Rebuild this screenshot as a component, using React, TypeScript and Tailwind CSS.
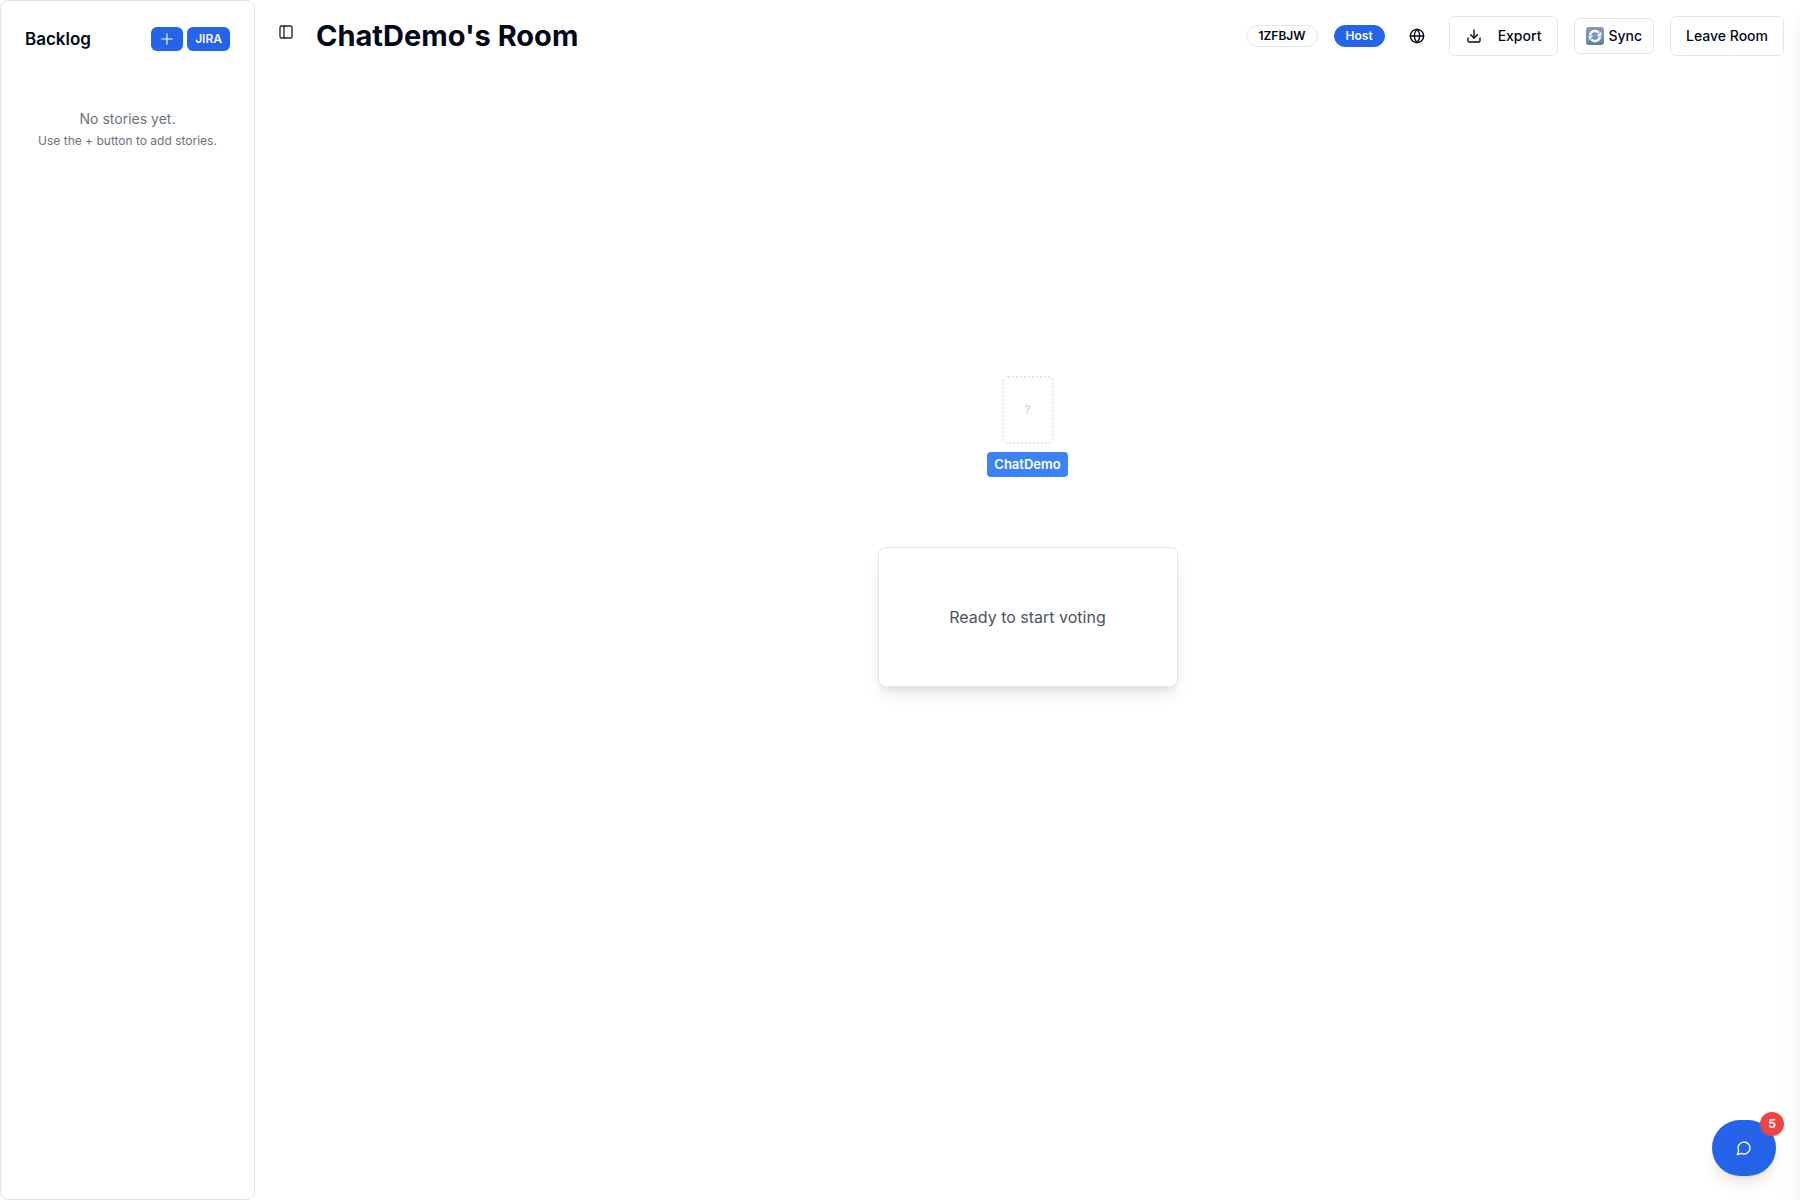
import { Download, Globe, PanelLeft, Plus } from "lucide-react";

function SyncIcon() {
  return (
    <svg viewBox="0 0 18 18" className="size-[18px]" aria-hidden="true">
      <defs>
        <linearGradient id="sync-tile" x1="0" y1="0" x2="0" y2="1">
          <stop offset="0" stopColor="#8b98a6" />
          <stop offset="0.5" stopColor="#6f9ac6" />
          <stop offset="1" stopColor="#66798c" />
        </linearGradient>
      </defs>
      <rect width="18" height="18" rx="3" fill="url(#sync-tile)" />
      <g fill="none" stroke="#f4f9ff" strokeWidth="2.4">
        <path d="M4 8.2A5 5 0 0 1 12.8 5.8" />
        <path d="M14 9.8A5 5 0 0 1 5.2 12.2" />
      </g>
      <path d="M15.2 4.6v4.6h-4.6z" fill="#f4f9ff" />
      <path d="M2.8 13.4V8.8h4.6z" fill="#f4f9ff" />
    </svg>
  );
}

function ChatIcon() {
  return (
    <svg
      viewBox="0 0 24 24"
      className="size-4"
      fill="none"
      stroke="currentColor"
      strokeWidth="2"
      strokeLinecap="round"
      strokeLinejoin="round"
      aria-hidden="true"
    >
      <path d="M7.9 20A9 9 0 1 0 4 16.1L2 22Z" />
    </svg>
  );
}

function Sidebar() {
  return (
    <aside className="w-[255px] shrink-0 rounded-lg border border-[#e4e4e7] bg-white p-6">
      <div className="flex h-7 items-center justify-between">
        <h2 className="text-[17px] leading-7 font-semibold">Backlog</h2>
        <div className="flex gap-1">
          <button
            aria-label="Add story"
            className="flex h-6 w-8 items-center justify-center rounded-md bg-[#2563eb] text-white"
          >
            <Plus className="size-[18px]" strokeWidth={1.5} />
          </button>
          <button className="h-6 rounded-md bg-[#2563eb] px-2 text-xs font-semibold text-white">
            JIRA
          </button>
        </div>
      </div>
      <div className="mt-14 text-center text-[#6b7280]">
        <p className="text-sm">No stories yet.</p>
        <p className="mt-1 text-xs">Use the + button to add stories.</p>
      </div>
    </aside>
  );
}

function Header() {
  return (
    <header className="flex items-center justify-between p-4">
      <div className="flex items-start gap-[22px]">
        <button aria-label="Toggle backlog" className="mt-1.5 ml-[7px] text-neutral-800">
          <PanelLeft className="size-4" />
        </button>
        <h1 className="text-[29px] leading-9 font-bold">ChatDemo's Room</h1>
      </div>
      <div className="flex items-center gap-4">
        <span className="rounded-full border border-gray-200 px-[11px] py-0.5 text-xs font-semibold">
          1ZFBJW
        </span>
        <span className="rounded-full border border-[#2563eb] bg-[#2563eb] px-[11px] py-0.5 text-xs font-semibold text-white">
          Host
        </span>
        <button aria-label="Language" className="flex size-8 items-center justify-center">
          <Globe className="size-4" />
        </button>
        <button className="flex h-10 items-center gap-4 rounded-md border border-gray-200 px-4 text-sm font-medium">
          <Download className="size-4" />
          Export
        </button>
        <button className="flex h-9 items-center gap-1 rounded-md border border-gray-200 px-[11px] text-sm font-medium">
          <SyncIcon />
          Sync
        </button>
        <button className="h-10 rounded-md border border-gray-200 px-[15px] text-sm font-medium">
          Leave Room
        </button>
      </div>
    </header>
  );
}

export default function App() {
  return (
    <div className="relative flex min-h-screen overflow-hidden bg-white font-['Inter',sans-serif] text-[#020817]">
      <Sidebar />
      <main className="flex min-w-0 flex-1 flex-col">
        <Header />
        <section className="flex flex-col items-center pt-76">
          <div className="flex h-17 w-13 items-center justify-center rounded-md border-2 border-dotted border-gray-200 text-xs font-semibold text-gray-300">
            ?
          </div>
          <div className="mt-2 rounded bg-[#3b82f6] px-[7px] py-0.5 text-[13px] leading-[21px] font-semibold text-white">
            ChatDemo
          </div>
          <div className="mt-[70px] flex h-35 w-75 items-center justify-center rounded-lg border border-gray-200 bg-white text-base text-[#4b5563] shadow-lg">
            Ready to start voting
          </div>
        </section>
      </main>
      <div className="absolute inset-y-0 left-full w-96 bg-white shadow-xl" />
      <button
        aria-label="Open chat, 5 unread messages"
        className="fixed right-6 bottom-6 flex h-14 w-16 items-center justify-center rounded-full bg-[#2563eb] text-white shadow-lg"
      >
        <ChatIcon />
        <span className="absolute -top-2 -right-2 flex size-6 items-center justify-center rounded-full bg-[#ef4444] text-xs font-bold">
          5
        </span>
      </button>
    </div>
  );
}
